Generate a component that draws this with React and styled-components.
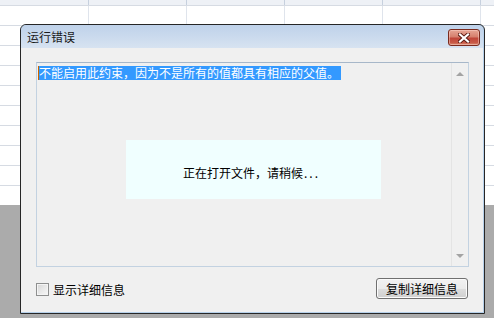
import React from "react";
import styled, { createGlobalStyle } from "styled-components";

const Global = createGlobalStyle`
  html, body { margin: 0; padding: 0; overflow: hidden; background: #ababab; }
  * { box-sizing: border-box; }
  body { font-family: "Noto Sans CJK SC", "Noto Sans", sans-serif; font-size: 12px; }
`;

const Screen = styled.div`
  position: relative;
  width: 494px;
  height: 318px;
  display: flex;
  flex-direction: column;
  background: #ababab;
  overflow: hidden;
`;

const HeaderStrip = styled.div`
  height: 5px;
  background-color: #eef1f6;
  background-image: linear-gradient(to right, #c6d0de 1px, transparent 1px);
  background-size: 98px 100%;
  background-position: 88px 0;
`;

const Grid = styled.div`
  height: 200px;
  background-color: #ffffff;
  background-image:
    linear-gradient(to bottom, #d6dbe3 1px, transparent 1px),
    linear-gradient(to right, #dfe4ec 1px, transparent 1px);
  background-size: 100% 20px, 98px 100%;
  background-position: 0 0, 88px 0;
`;

const Dialog = styled.div`
  position: absolute;
  left: 20px;
  top: 24px;
  width: 465px;
  height: 290px;
  border: 1px solid #262626;
  border-radius: 6px 6px 0 0;
  background: #b6d0ea;
  padding: 0 1px 1px 0;
  display: flex;
  flex-direction: column;
  overflow: hidden;
`;

const TitleBar = styled.div`
  height: 23px;
  flex: none;
  display: flex;
  align-items: center;
  justify-content: space-between;
  padding: 0 3px 0 6px;
  background: linear-gradient(to bottom, #bfd2ea 0%, #c9d9ed 45%, #d7e3f1 100%);
  border-radius: 5px 5px 0 0;
`;

const Title = styled.span`
  font-size: 12px;
  color: #1a1a1a;
  line-height: 12px;
  margin-top: 1px;
`;

const CloseButton = styled.div`
  width: 32px;
  height: 17px;
  margin-top: 2px;
  border: 1px solid #7a2a1e;
  border-radius: 3px;
  background: linear-gradient(to bottom, #e7a595 0%, #d6806e 45%, #c0463a 55%, #c85a47 85%, #dc8f76 100%);
  box-shadow: inset 0 0 0 1px rgba(255, 220, 210, 0.45);
  display: flex;
  align-items: center;
  justify-content: center;
`;

const Client = styled.div`
  position: relative;
  flex: 1;
  background: #f0f0f0;
  display: flex;
  flex-direction: column;
  padding: 14px 14px 0 15px;
`;

const TextBox = styled.div`
  position: relative;
  height: 205px;
  border: 1px solid #c3d2e1;
  border-top-color: #a7b7c9;
  background: #f0f0f0;
  display: flex;
`;

const TextArea = styled.div`
  flex: 1;
  padding: 1px 0 0 1px;
`;

const Selected = styled.span`
  position: relative;
  display: inline-block;
  background: #3399ff;
  color: #ffffff;
  font-size: 12px;
  line-height: 14px;
  height: 14px;
  padding: 0 2px 0 1px;
  &::before {
    content: "";
    position: absolute;
    left: 0;
    top: 0;
    width: 1px;
    height: 14px;
    background: #cc6600;
  }
`;

const ScrollBar = styled.div`
  width: 17px;
  flex: none;
  border-left: 1px solid #e4e4e4;
  background: #f0f0f0;
  display: flex;
  flex-direction: column;
  justify-content: space-between;
  align-items: center;
  padding: 9px 0 8px;
`;

const Arrow = styled.div`
  width: 0;
  height: 0;
  border-left: 4px solid transparent;
  border-right: 4px solid transparent;
  ${(p) =>
    p.$up
      ? "border-bottom: 4px solid #a3a3a3;"
      : "border-top: 4px solid #a3a3a3;"}
`;

const Footer = styled.div`
  display: flex;
  align-items: center;
  justify-content: space-between;
  margin-top: 11px;
  padding-right: 1px;
`;

const CheckRow = styled.label`
  display: flex;
  align-items: center;
  gap: 4px;
  font-size: 12px;
  color: #000;
  margin-top: 2px;
`;

const CheckBox = styled.span`
  width: 13px;
  height: 13px;
  border: 1px solid #8e8f8f;
  background: linear-gradient(135deg, #d4d4d4 0%, #e8e8e8 50%, #f7f7f7 100%);
  box-shadow: inset 0 0 0 1px #f4f4f4;
`;

const Button = styled.div`
  width: 92px;
  height: 21px;
  border: 1px solid #707070;
  border-radius: 3px;
  background: linear-gradient(to bottom, #f2f2f2 0%, #ebebeb 50%, #dddddd 51%, #cfcfcf 100%);
  box-shadow: inset 0 0 0 1px #fbfbfb;
  display: flex;
  align-items: center;
  justify-content: center;
  font-size: 12px;
  color: #000;
  line-height: 12px;
`;

const LoadingBox = styled.div`
  position: absolute;
  left: 105px;
  top: 92px;
  width: 255px;
  height: 59px;
  background: #f0ffff;
  display: flex;
  align-items: center;
  justify-content: center;
  padding: 5px 4px 0 0;
  font-size: 12px;
  color: #000;
`;

const Dots = styled.span`
  letter-spacing: 2px;
  margin-left: 1px;
`;

export default function App() {
  return (
    <>
      <Global />
      <Screen>
        <HeaderStrip />
        <Grid />
        <Dialog>
          <TitleBar>
            <Title>运行错误</Title>
            <CloseButton>
              <svg width="12" height="10" viewBox="0 0 12 10">
                <path d="M2 1.5 L10 8.5 M10 1.5 L2 8.5" stroke="#5a1a12" strokeWidth="4" strokeLinecap="square" />
                <path d="M2 1.5 L10 8.5 M10 1.5 L2 8.5" stroke="#ffffff" strokeWidth="2.2" strokeLinecap="square" />
              </svg>
            </CloseButton>
          </TitleBar>
          <Client>
            <TextBox>
              <TextArea>
                <Selected>不能启用此约束，因为不是所有的值都具有相应的父值。</Selected>
              </TextArea>
              <ScrollBar>
                <Arrow $up />
                <Arrow />
              </ScrollBar>
            </TextBox>
            <Footer>
              <CheckRow>
                <CheckBox />
                显示详细信息
              </CheckRow>
              <Button>复制详细信息</Button>
            </Footer>
            <LoadingBox>
              正在打开文件，请稍候<Dots>...</Dots>
            </LoadingBox>
          </Client>
        </Dialog>
      </Screen>
    </>
  );
}
